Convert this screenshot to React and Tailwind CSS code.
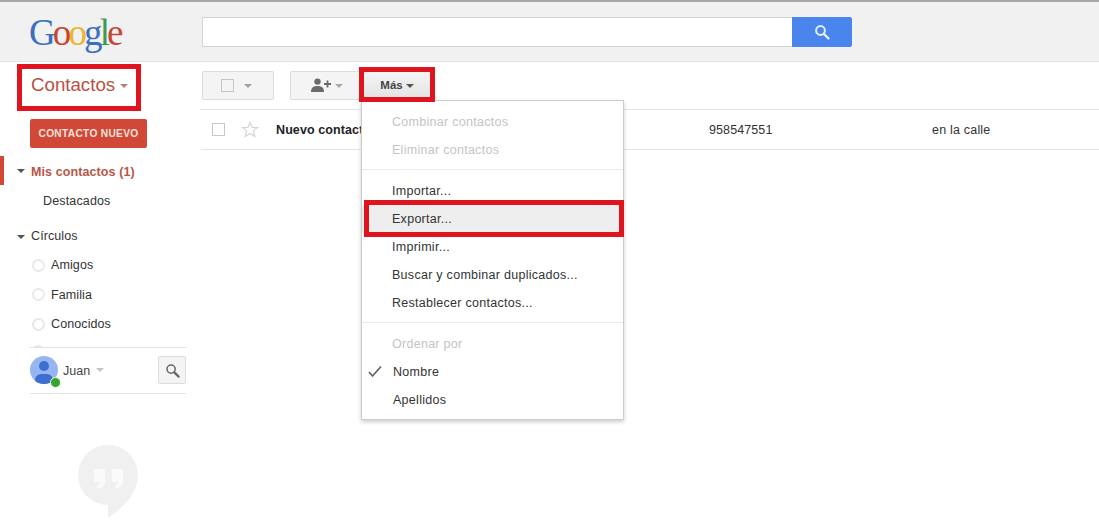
import React from "react";

const Caret = ({ className = "border-t-[#7a7a7a]" }) => (
  <span className={`inline-block w-0 h-0 border-x-[4px] border-x-transparent border-t-[4px] ${className}`} />
);

const Check = ({ className = "" }) => (
  <span className={`block w-[13px] h-[13px] border border-[#c6c6c6] bg-white/70 ${className}`} />
);

const Mag = ({ color, size = 16, w = 2 }) => (
  <svg width={size} height={size} viewBox="0 0 16 16" fill="none">
    <circle cx="6.5" cy="6.5" r="4.4" stroke={color} strokeWidth={w} />
    <path d="M10 10l4.5 4.5" stroke={color} strokeWidth="2.4" strokeLinecap="round" />
  </svg>
);

const MenuItem = ({ children, disabled, hl }) => (
  <div className={`h-[28px] pl-[30px] flex items-center text-[12.5px] tracking-[0.28px] ${disabled ? "text-[#c4c4c4]" : "text-[#333]"} ${hl ? "bg-[#eee]" : ""}`}>
    {children}
  </div>
);

const Circle = ({ name }) => (
  <div className="h-[29.3px] pl-[32px] flex items-center gap-[6px] text-[12.5px] tracking-[0.1px] text-[#333]">
    <span className="block w-[13px] h-[13px] rounded-full border-2 border-[#e8e8e8]" />
    <span>{name}</span>
  </div>
);

export default function App() {
  return (
    <div className="relative w-[1099px] h-[529px] overflow-hidden bg-white font-['Liberation_Sans',Arial,sans-serif]">
      <div className="h-[2px] bg-[#a8a8a8]" />
      <header className="h-[60px] bg-[#f1f1f1] border-b border-[#e2e2e2] flex items-start">
        <div className="w-[202px] pl-[29px] pt-[9px] font-['Liberation_Serif',serif] text-[37px] leading-[44px] tracking-[-2.9px]">
          <span className="text-[#3a6fc4]">G</span>
          <span className="text-[#c9452f]">o</span>
          <span className="text-[#e8b82e]">o</span>
          <span className="text-[#3a6fc4]">g</span>
          <span className="text-[#3c9a55]">l</span>
          <span className="text-[#c9452f]">e</span>
        </div>
        <div className="mt-[15px] flex">
          <div className="w-[590px] h-[30px] bg-white border border-[#d4d4d4] border-r-0" />
          <div className="w-[60px] h-[30px] bg-[#4a85ee] rounded-r-[2px] flex items-center justify-center">
            <Mag color="#e8f0fd" />
          </div>
        </div>
      </header>

      <div className="flex">
        <aside className="w-[200px] shrink-0">
          <div className="h-[47px] ml-[17px] mt-[2px] w-[124px] border-[5px] border-[#e0141f] flex items-center gap-[5px] pl-[9px] pb-[4px] -mb-[2px] relative z-10">
            <span className="text-[18.7px] leading-none text-[#b9503f]">Contactos</span>
            <Caret className="border-t-[#b98078]" />
          </div>
          <button className="mt-[10px] ml-[30px] w-[117px] h-[29px] rounded-[2px] bg-[#d14836] text-[#f6e3df] text-[10.2px] font-bold tracking-[0.3px] flex items-center justify-center">
            CONTACTO NUEVO
          </button>
          <div className="mt-[8px] h-[29px] flex items-center">
            <span className="w-[4px] h-[29px] bg-[#d14836]" />
            <span className="ml-[13px] mr-[6px] flex"><Caret className="border-t-[#555]" /></span>
            <span className="pt-[4px] text-[12.5px] font-bold text-[#b9564a] tracking-[0.1px]">Mis contactos (1)</span>
          </div>
          <div className="mt-[2px] h-[29px] pl-[43px] flex items-center text-[12.5px] tracking-[0.15px] text-[#333]">Destacados</div>
          <div className="mt-[6px] h-[29px] flex items-center pl-[17px] gap-[6px] text-[12.5px] tracking-[0.1px] text-[#333]">
            <Caret className="border-t-[#555]" />
            <span>Círculos</span>
          </div>
          <Circle name="Amigos" />
          <Circle name="Familia" />
          <Circle name="Conocidos" />
          <div className="h-[8px] overflow-hidden pl-[32px] pt-[6px]">
            <span className="block w-[13px] h-[13px] rounded-full border-2 border-[#e8e8e8]" />
          </div>
          <div className="ml-[30px] w-[156px] h-[47px] border-y border-[#e4e4e4] flex items-center">
            <div className="relative w-[28px] h-[28px] rounded-full bg-[#97b6f1] overflow-hidden shrink-0">
              <span className="absolute left-[9px] top-[5px] w-[10px] h-[10px] rounded-full bg-[#3e6fd0]" />
              <span className="absolute left-[5px] top-[18px] w-[18px] h-[12px] rounded-full bg-[#3e6fd0]" />
            </div>
            <span className="absolute left-[50px] top-[377px] w-[11px] h-[11px] rounded-full bg-[#37a52c] border border-[#f4f4f4]" />
            <span className="ml-[5px] mt-[1px] text-[12.5px] text-[#444]">Juan</span>
            <span className="ml-[6px] flex -mt-[1px]"><Caret className="border-t-[#c4c4c4]" /></span>
            <div className="ml-auto w-[28px] h-[28px] rounded-[2px] bg-[#f4f4f4] border border-[#dcdcdc] flex items-center justify-center">
              <Mag color="#666" size={15} w={1.6} />
            </div>
          </div>
          <div className="mt-[51px] ml-[78px]">
            <svg width="60" height="74" viewBox="0 0 60 74">
              <path d="M30 0a30 30 0 0 1 30 30c0 18-14 32-30 43V60A30 30 0 0 1 30 0z" fill="#f0f0f0" />
              <path d="M16 24h11v12c0 4-3 7-7 8l-1-3c2-1 3-2 3-4h-6zM34 24h11v12c0 4-3 7-7 8l-1-3c2-1 3-2 3-4h-6z" fill="#fafafa" />
            </svg>
          </div>
        </aside>

        <main className="flex-1 min-w-0">
          <div className="h-[48px] border-b border-[#e5e5e5] flex items-start pt-[9px]">
            <div className="ml-[2px] w-[72px] h-[29px] bg-[#f4f4f4] border border-[#dcdcdc] rounded-[2px] flex items-center pl-[18px] gap-[10px]">
              <Check className="!bg-transparent" />
              <Caret className="border-t-[#a0a0a0]" />
            </div>
            <div className="ml-[16px] w-[70px] h-[29px] bg-[#f4f4f4] border border-[#dcdcdc] rounded-[2px] flex items-center pl-[20px] gap-[4px]">
              <svg width="20" height="15" viewBox="0 0 20 15">
                <circle cx="6.5" cy="3.6" r="3.2" fill="#6a6a6a" />
                <path d="M0 14c0-4 2-6 6.5-6s6.5 2 6.5 6z" fill="#6a6a6a" />
                <path d="M13 6h7M16.5 2.5v7" stroke="#6a6a6a" strokeWidth="1.8" />
              </svg>
              <Caret className="border-t-[#a8a8a8]" />
            </div>
          </div>
          <div className="h-[40px] ml-px border-b border-[#e5e5e5] flex items-center text-[12.5px] text-[#333]">
            <Check className="ml-[11px]" />
            <svg className="ml-[16px]" width="18" height="17" viewBox="0 0 18 17" fill="none">
              <path d="M9 1.5l2.2 5h5.3l-4.2 3.4 1.5 5.5L9 12.4l-4.8 3 1.5-5.5L1.5 6.5h5.3z" stroke="#d4d4d4" strokeWidth="1.2" />
            </svg>
            <span className="ml-[17px] pt-[2px] w-[433px] shrink-0 font-bold text-[#222] tracking-[0.1px]">Nuevo contacto</span>
            <span className="w-[223px] pt-[2px] shrink-0 tracking-[0.1px]">958547551</span>
            <span className="pt-[2px] tracking-[0.2px]">en la calle</span>
          </div>
        </main>
      </div>

      {/* Más button with its red highlight, over the toolbar */}
      <div className="absolute left-[359px] top-[67px] w-[76px] h-[35px] z-20 border-[5px] border-[#e0141f] bg-gradient-to-b from-[#f5f5f5] to-[#e4e4e4] flex items-center justify-center gap-[3px] text-[11.5px] font-bold text-[#444] pt-[2px]">
        <span>Más</span>
        <Caret className="border-t-[#555]" />
      </div>

      {/* Dropdown menu */}
      <div className="absolute left-[361px] top-[100px] w-[263px] h-[320px] z-10 bg-white border border-[#ccc] shadow-[0_2px_4px_rgba(0,0,0,0.2)] pt-[7px]">
        <MenuItem disabled>Combinar contactos</MenuItem>
        <MenuItem disabled>Eliminar contactos</MenuItem>
        <div className="mt-[5px] mb-[7px] border-t border-[#ebebeb]" />
        <MenuItem>Importar...</MenuItem>
        <MenuItem hl>Exportar...</MenuItem>
        <MenuItem>Imprimir...</MenuItem>
        <MenuItem>Buscar y combinar duplicados...</MenuItem>
        <MenuItem>Restablecer contactos...</MenuItem>
        <div className="mt-[5px] mb-[7px] border-t border-[#ebebeb]" />
        <MenuItem disabled>Ordenar por</MenuItem>
        <div className="relative">
          <svg className="absolute left-[6px] top-[7px]" width="14" height="13" viewBox="0 0 14 13" fill="none">
            <path d="M1 7l3.5 4L13 1.5" stroke="#666" strokeWidth="1.8" />
          </svg>
          <MenuItem><span className="ml-px">Nombre</span></MenuItem>
        </div>
        <MenuItem><span className="ml-px">Apellidos</span></MenuItem>
      </div>

      {/* Exportar highlight */}
      <div className="absolute left-[364px] top-[200px] w-[260px] h-[37px] z-20 border-[5px] border-[#e0141f] pointer-events-none" />
    </div>
  );
}
